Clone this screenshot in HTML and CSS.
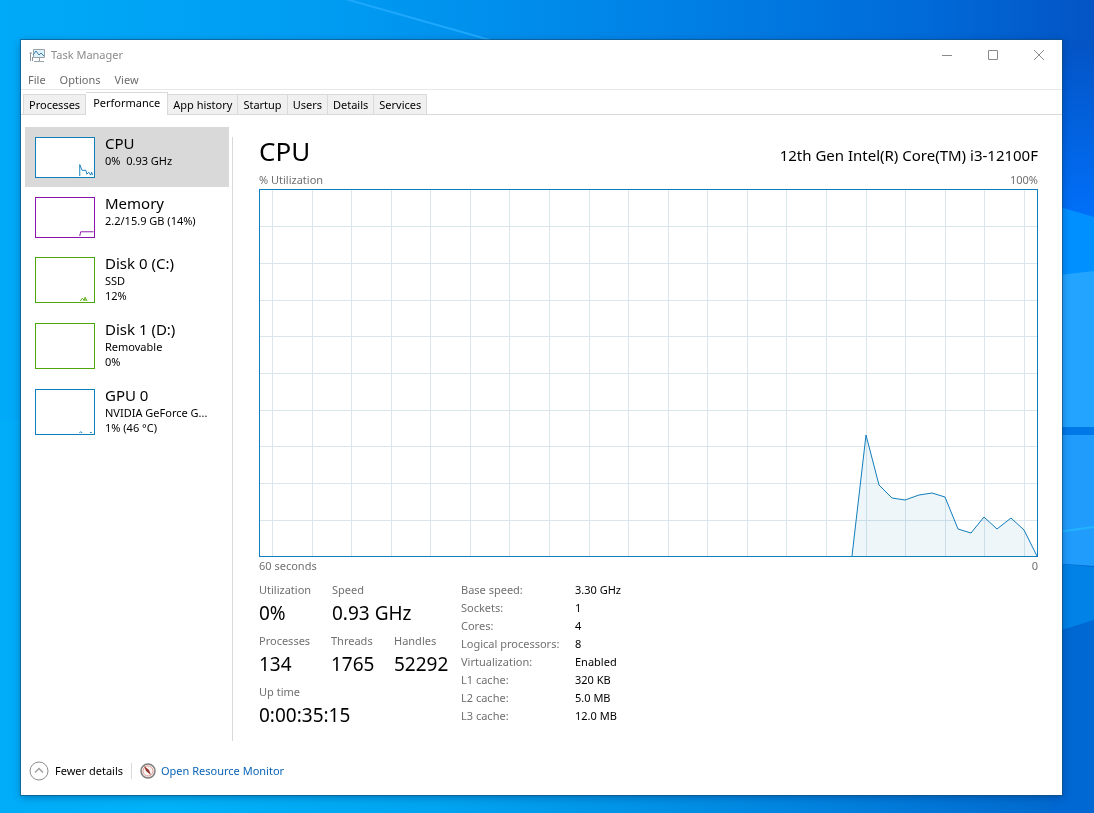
FILE: index.html
```html
<!DOCTYPE html>
<html lang="en">
<head>
    <meta charset="UTF-8">
    <meta name="viewport" content="width=device-width, initial-scale=1.0">
    <title>Task Manager</title>
    <link rel="stylesheet" href="styles.css">
</head>
<body>

    <!-- Desktop wallpaper -->
    <svg class="wallpaper" viewBox="0 0 1094 813" preserveAspectRatio="none" aria-hidden="true">
        <defs>
            <linearGradient id="sky" x1="0" y1="0" x2="1" y2="0">
                <stop offset="0" stop-color="#00aaf8"/>
                <stop offset=".3" stop-color="#009cf2"/>
                <stop offset=".6" stop-color="#0082e6"/>
                <stop offset=".85" stop-color="#006ad8"/>
                <stop offset="1" stop-color="#0454c4"/>
            </linearGradient>
            <linearGradient id="ground" x1="0" y1="0" x2="1" y2="0">
                <stop offset="0" stop-color="#00acf8"/>
                <stop offset=".15" stop-color="#00b2f8"/>
                <stop offset=".4" stop-color="#00a4f0"/>
                <stop offset=".75" stop-color="#0082de"/>
                <stop offset="1" stop-color="#0066cc"/>
            </linearGradient>
            <linearGradient id="side" x1="0" y1="0" x2="0" y2="1">
                <stop offset="0" stop-color="#0454c4"/>
                <stop offset="1" stop-color="#0070fa"/>
            </linearGradient>
        </defs>
        <rect width="1094" height="420" fill="url(#sky)"/>
        <rect y="420" width="1094" height="393" fill="url(#ground)"/>
        <path d="M1050 40H1094V220H1050z" fill="url(#side)"/>
        <path d="M1050 204L1094 217V275H1050z" fill="#0090ff"/>
        <path d="M1050 276L1094 271V428H1050z" fill="#22a4ff"/>
        <path d="M1050 427H1094V435H1050z" fill="#0078e8"/>
        <path d="M1050 435H1094V566L1050 563z" fill="#209cfc"/>
        <path d="M1050 563L1094 567V620L1050 634z" fill="#0082e6"/>
        <path d="M1050 634L1094 620V813H1050z" fill="#0068d2"/>
        <path d="M1050 533L1094 527" stroke="#22b4ff" stroke-width="2"/>
        <path d="M342 -2L490 40" stroke="#1ea8fc" stroke-width="2"/>
    </svg>

    <main class="window">
        <header class="titlebar">
            <svg class="app-icon" width="17" height="15" viewBox="0 0 17 15" aria-hidden="true">
                <path d="M4.500 1.500H15.500V9.500H4.500z" fill="#e0f0f8" stroke="#98a2a9"/>
                <path d="M4 7L7 3L10 7L12 5L15 8" fill="none" stroke="#3b83ad"/>
                <path d="M1.500 5V13M3.500 9V13M.500 5H3" fill="none" stroke="#8a9299"/>
                <path d="M5 13.500H15M10.500 10V13" stroke="#98a2a9"/>
            </svg>
            <span class="title">Task Manager</span>
            <div class="window-buttons">
                <button type="button" aria-label="Minimize">
                    <svg width="12" height="12" viewBox="0 0 12 12"><path d="M1 6.500H11"/></svg>
                </button>
                <button type="button" aria-label="Maximize">
                    <svg width="12" height="12" viewBox="0 0 12 12"><path d="M1.500 1.500H10.500V10.500H1.500z"/></svg>
                </button>
                <button type="button" aria-label="Close">
                    <svg width="12" height="12" viewBox="0 0 12 12"><path d="M1 1L11 11M11 1L1 11"/></svg>
                </button>
            </div>
        </header>

        <nav class="menu">
            <button type="button">File</button>
            <button type="button">Options</button>
            <button type="button">View</button>
        </nav>

        <div class="tabs" role="tablist">
            <button type="button" role="tab">Processes</button>
            <button type="button" role="tab" class="active" aria-selected="true">Performance</button>
            <button type="button" role="tab">App history</button>
            <button type="button" role="tab">Startup</button>
            <button type="button" role="tab">Users</button>
            <button type="button" role="tab">Details</button>
            <button type="button" role="tab">Services</button>
        </div>

        <div class="content">
            <aside class="sidebar">
                <button type="button" class="device short selected">
                    <svg class="thumb blue" viewBox="0 0 60 41"><path d="M45.500 40V28L48 34H52L53 38L55 36L57 39L58 36L59 39"/></svg>
                    <span class="device-text">
                        <span class="name">CPU</span>
                        <span>0%&nbsp; 0.93 GHz</span>
                    </span>
                </button>
                <button type="button" class="device short">
                    <svg class="thumb purple" viewBox="0 0 60 41"><path d="M45.500 40L46.500 35.500H60"/></svg>
                    <span class="device-text">
                        <span class="name">Memory</span>
                        <span>2.2/15.9 GB (14%)</span>
                    </span>
                </button>
                <button type="button" class="device">
                    <svg class="thumb green" viewBox="0 0 60 46"><path d="M46 45L48 42L50 44L51 41L53 45M49 44H52"/></svg>
                    <span class="device-text">
                        <span class="name">Disk 0 (C:)</span>
                        <span>SSD</span>
                        <span>12%</span>
                    </span>
                </button>
                <button type="button" class="device">
                    <svg class="thumb green" viewBox="0 0 60 46"></svg>
                    <span class="device-text">
                        <span class="name">Disk 1 (D:)</span>
                        <span>Removable</span>
                        <span>0%</span>
                    </span>
                </button>
                <button type="button" class="device">
                    <svg class="thumb blue" viewBox="0 0 60 46"><path d="M45 45L46.500 43.500L48 45M56 44.500H58"/></svg>
                    <span class="device-text">
                        <span class="name">GPU 0</span>
                        <span>NVIDIA GeForce G...</span>
                        <span>1% (46 °C)</span>
                    </span>
                </button>
            </aside>

            <section class="details">
                <div class="heading">
                    <h1>CPU</h1>
                    <h2>12th Gen Intel(R) Core(TM) i3-12100F</h2>
                </div>
                <div class="axis"><span>% Utilization</span><span>100%</span></div>
                <svg class="chart" viewBox="0 0 779 368" preserveAspectRatio="none" role="img" aria-label="CPU utilization">
                    <path class="grid" d="M13.500 0V367M53.500 0V367M92.500 0V367M132.500 0V367M171.500 0V367M211.500 0V367M250.500 0V367M290.500 0V367M330.500 0V367M369.500 0V367M409.500 0V367M448.500 0V367M488.500 0V367M527.500 0V367M567.500 0V367M607.500 0V367M646.500 0V367M686.500 0V367M725.500 0V367M765.500 0V367"/>
                    <path class="grid" d="M0 37.500H778M0 74.500H778M0 111.500H778M0 147.500H778M0 184.500H778M0 221.500H778M0 257.500H778M0 294.500H778M0 331.500H778"/>
                    <path class="usage" d="M593 367L607 246L620 296L633 309L646 311L660 306L673 304L686 308L699 340L712 344L725 328L738 340L752 329L765 341L778 367"/>
                    <rect class="frame" x=".500" y=".500" width="778" height="367"/>
                </svg>
                <div class="axis bottom"><span>60 seconds</span><span>0</span></div>

                <div class="stats">
                    <div class="counters">
                        <dl class="wide">
                            <div><dt>Utilization</dt><dd>0%</dd></div>
                            <div><dt>Speed</dt><dd>0.93 GHz</dd></div>
                        </dl>
                        <dl>
                            <div><dt>Processes</dt><dd>134</dd></div>
                            <div><dt>Threads</dt><dd>1765</dd></div>
                            <div><dt>Handles</dt><dd>52292</dd></div>
                        </dl>
                        <dl>
                            <div><dt>Up time</dt><dd>0:00:35:15</dd></div>
                        </dl>
                    </div>
                    <table class="specs">
                        <tr><th scope="row">Base speed:</th><td>3.30 GHz</td></tr>
                        <tr><th scope="row">Sockets:</th><td>1</td></tr>
                        <tr><th scope="row">Cores:</th><td>4</td></tr>
                        <tr><th scope="row">Logical processors:</th><td>8</td></tr>
                        <tr><th scope="row">Virtualization:</th><td>Enabled</td></tr>
                        <tr><th scope="row">L1 cache:</th><td>320 KB</td></tr>
                        <tr><th scope="row">L2 cache:</th><td>5.0 MB</td></tr>
                        <tr><th scope="row">L3 cache:</th><td>12.0 MB</td></tr>
                    </table>
                </div>
            </section>
        </div>

        <footer class="footer">
            <button type="button" class="fewer">
                <svg width="20" height="20" viewBox="0 0 20 20" aria-hidden="true">
                    <circle cx="10" cy="10" r="9" fill="#fff" stroke="#8c8c8c"/>
                    <path d="M6 11.500L10 7.500L14 11.500" fill="none" stroke="#a0a0a0" stroke-width="1.500"/>
                </svg>
                Fewer details
            </button>
            <a class="monitor" href="#">
                <svg width="16" height="16" viewBox="0 0 16 16" aria-hidden="true">
                    <circle cx="8" cy="8" r="7" fill="#f8f4f2" stroke="#7d7d7d" stroke-width="1.500"/>
                    <circle cx="8" cy="8" r="5" fill="none" stroke="#dc9a92"/>
                    <path d="M4 3L9 7L11 12L6 8z" fill="#96322c"/>
                </svg>
                Open Resource Monitor
            </a>
        </footer>
    </main>

</body>
</html>
```
FILE: styles.css
```css
* {
    box-sizing: border-box;
}
body {
    display: flex;
    min-height: 100vh;
    margin: 0;
    padding: 40px 32px 18px 21px;
    background-color: #009cf2;
    font-family: "Noto Sans", "Open Sans", sans-serif;
    font-size: 11px;
    line-height: 16px;
    color: #000;
}
button {
    margin: 0;
    padding: 0;
    border: none;
    background: none;
    font: inherit;
    color: inherit;
    text-align: left;
}
svg {
    display: block;
    flex: none;
}
.wallpaper {
    position: fixed;
    top: 0;
    left: 0;
    width: 100%;
    height: 100%;
    z-index: -1;
}
.window {
    flex: 1;
    display: flex;
    flex-direction: column;
    background-color: #fff;
    box-shadow: 0 0 0 1px rgba(20, 80, 120, 0.6), 0 2px 8px rgba(0, 30, 80, 0.4);
}

/* Title bar and menu */
.titlebar {
    display: flex;
    align-items: center;
    height: 30px;
    padding-left: 8px;
    color: #8c8c8c;
}
.title {
    margin-left: 5px;
}
.window-buttons {
    display: flex;
    margin-left: auto;
}
.window-buttons button {
    display: flex;
    justify-content: center;
    align-items: center;
    width: 46px;
    height: 28px;
}
.window-buttons path {
    fill: none;
    stroke: #8a8a8a;
}
.menu {
    display: flex;
    gap: 14px;
    height: 20px;
    padding: 2px 7px;
    border-bottom: 1px solid #e8e8e8;
    color: #6b6b6b;
}

/* Tabs */
.tabs {
    display: flex;
    align-items: flex-end;
    height: 25px;
    padding-left: 2px;
    border-bottom: 1px solid #d9d9d9;
}
.tabs button {
    height: 20px;
    padding: 0 5px;
    border: 1px solid #d9d9d9;
    border-left: none;
    border-bottom: none;
    background-color: #f0f0f0;
}
.tabs .active {
    height: 23px;
    margin-bottom: -1px;
    padding: 0 7px 3px;
    background-color: #fff;
}
.tabs button:first-child {
    border-left: 1px solid #d9d9d9;
}

/* Device list */
.content {
    flex: 1;
    display: flex;
    padding: 12px 24px 10px 4px;
}
.sidebar {
    width: 204px;
    flex: none;
}
.device {
    display: flex;
    width: 100%;
    height: 66px;
    padding: 10px 10px 0;
}
.device.short {
    height: 60px;
}
.device.selected {
    background-color: #d9d9d9;
}
.thumb {
    width: 60px;
    height: 46px;
    border: 1px solid;
    background-color: #fff;
}
.short .thumb {
    height: 41px;
}
.thumb path {
    fill: none;
    stroke: currentColor;
}
.blue {
    color: #117dbb;
}
.purple {
    color: #8b12ae;
}
.green {
    color: #4da60c;
}
.device-text {
    display: flex;
    flex-direction: column;
    margin-left: 10px;
    line-height: 15px;
    white-space: nowrap;
}
.name {
    margin-top: -3px;
    font-size: 15px;
    line-height: 19px;
}

/* Chart */
.details {
    flex: 1;
    display: flex;
    flex-direction: column;
    min-width: 0;
    margin-left: 3px;
    margin-top: 10px;
    padding-left: 26px;
    border-left: 1px solid #d9d9d9;
}
.heading {
    display: flex;
    justify-content: space-between;
    align-items: baseline;
    height: 34px;
}
h1, h2 {
    margin: 0;
    font-weight: normal;
}
h1 {
    font-size: 26px;
    line-height: 28px;
}
h2 {
    font-size: 15px;
    line-height: 20px;
}
.axis {
    display: flex;
    justify-content: space-between;
    line-height: 18px;
    color: #707070;
}
.chart {
    width: 100%;
    height: 368px;
}
.grid {
    stroke: #d9e6ee;
}
.usage {
    fill: #117dbb;
    fill-opacity: 0.07;
    stroke: #117dbb;
}
.frame {
    fill: none;
    stroke: #117dbb;
}

/* Figures under the chart */
.stats {
    display: flex;
    padding-top: 6px;
}
.counters {
    width: 202px;
    padding-top: 1px;
}
dl {
    display: grid;
    grid-template-columns: 72px 63px 1fr;
    height: 51px;
    margin: 0;
}
dl.wide {
    grid-template-columns: 73px 1fr;
}
dt {
    color: #707070;
}
dd {
    margin: 0;
    font-size: 19px;
    line-height: 30px;
    white-space: nowrap;
}
.specs {
    align-self: flex-start;
    border-collapse: collapse;
    line-height: 18px;
}
.specs th {
    width: 114px;
    padding: 0;
    font-weight: normal;
    text-align: left;
    color: #707070;
}
.specs td {
    padding: 0;
}

/* Footer */
.footer {
    display: flex;
    align-items: center;
    height: 44px;
    padding: 0 8px 5px;
}
.fewer {
    display: flex;
    align-items: center;
    gap: 6px;
    padding-right: 8px;
}
.monitor {
    display: flex;
    align-items: center;
    gap: 5px;
    padding-left: 8px;
    border-left: 1px solid #d9d9d9;
    color: #0a63b5;
    text-decoration: none;
}
```
